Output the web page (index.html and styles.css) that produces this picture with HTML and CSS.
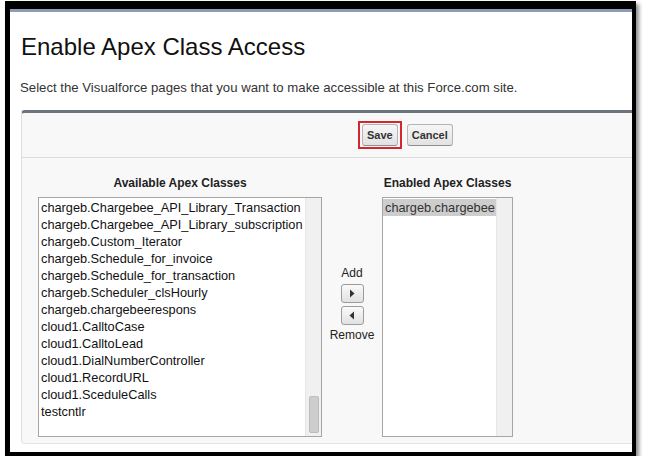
FILE: index.html
```html
<!DOCTYPE html>
<html lang="en">
<head>
    <meta charset="UTF-8">
    <meta name="viewport" content="width=device-width, initial-scale=1.0">
    <title>Enable Apex Class Access</title>
    <link rel="stylesheet" href="styles.css">
</head>
<body>
    <div class="frame">
        <div class="stripe"></div>
        <div class="page">
            <h1>Enable Apex Class Access</h1>
            <p class="intro">Select the Visualforce pages that you want to make accessible at this Force.com site.</p>

            <div class="panel">
                <div class="button-row">
                    <span class="highlight"><button class="btn">Save</button></span>
                    <button class="btn btn-cancel">Cancel</button>
                </div>

                <div class="picker">
                    <div class="col col-available">
                        <div class="col-title">Available Apex Classes</div>
                        <div class="listbox">
                            <ul class="options">
                                <li>chargeb.Chargebee_API_Library_Transaction</li>
                                <li>chargeb.Chargebee_API_Library_subscription</li>
                                <li>chargeb.Custom_Iterator</li>
                                <li>chargeb.Schedule_for_invoice</li>
                                <li>chargeb.Schedule_for_transaction</li>
                                <li>chargeb.Scheduler_clsHourly</li>
                                <li>chargeb.chargebeerespons</li>
                                <li>cloud1.CalltoCase</li>
                                <li>cloud1.CalltoLead</li>
                                <li>cloud1.DialNumberController</li>
                                <li>cloud1.RecordURL</li>
                                <li>cloud1.SceduleCalls</li>
                                <li>testcntlr</li>
                            </ul>
                            <div class="scrollbar"><div class="thumb"></div></div>
                        </div>
                    </div>

                    <div class="col-mid">
                        <div class="mid-label">Add</div>
                        <button class="arrow-btn" title="Add">
                            <svg width="6" height="9" viewBox="0 0 6 9"><path d="M1 0.5 L5.5 4.5 L1 8.5 Z" fill="#333"/></svg>
                        </button>
                        <button class="arrow-btn arrow-left" title="Remove">
                            <svg width="6" height="9" viewBox="0 0 6 9"><path d="M5 0.5 L0.5 4.5 L5 8.5 Z" fill="#333"/></svg>
                        </button>
                        <div class="mid-label mid-remove">Remove</div>
                    </div>

                    <div class="col col-enabled">
                        <div class="col-title">Enabled Apex Classes</div>
                        <div class="listbox">
                            <ul class="options">
                                <li class="selected">chargeb.chargebee</li>
                            </ul>
                            <div class="scrollbar"></div>
                        </div>
                    </div>
                </div>
            </div>
        </div>
    </div>
</body>
</html>
```

FILE: styles.css
```css
/* Рамка скриншота */
body {
    margin: 0;
    padding: 0;
    background: #fff;
    font-family: "Liberation Sans", Arial, sans-serif;
    color: #222;
}

.frame {
    box-sizing: content-box;
    width: 622px;
    height: 443px;
    margin: 1px 0 0 5px;
    border-style: solid;
    border-color: #000;
    border-width: 8px 4px 4px 5px;
    background: #fff;
    overflow: hidden;
    box-shadow: 3px 3px 4px rgba(0, 0, 0, 0.45);
}

.stripe {
    height: 3px;
    background-color: #8c9cb3;
}

.page {
    padding-left: 11px;
}

h1 {
    margin: 21px 0 0;
    font-size: 24px;
    line-height: 28px;
    font-weight: normal;
    color: #111;
}

.intro {
    margin: 19px 0 0 -1px;
    font-size: 13.2px;
    line-height: 16px;
    color: #333;
}

/* Основной блок */
.panel {
    margin: 14px -20px 0 0;
    background-color: #f8f8f8;
    border-top: 3px solid #6c7482;
    border-left: 1px solid #dedede;
    border-bottom: 1px solid #e4e4e4;
    border-radius: 4px 0 0 4px;
}

.button-row {
    display: flex;
    align-items: center;
    height: 44px;
    padding-left: 336px;
    border-bottom: 1px solid #dcdcdc;
}

.highlight {
    display: flex;
    padding: 1px 2px;
    border: 2px solid #d3262d;
}

.btn {
    height: 22px;
    padding: 0 4px;
    font-family: "Liberation Sans", Arial, sans-serif;
    font-size: 11px;
    font-weight: bold;
    color: #333;
    background: linear-gradient(#f6f6f6, #e2e2e2);
    border: 1px solid #b5b5b5;
    border-bottom-color: #8f8f8f;
    border-radius: 3px;
}

.btn-cancel {
    margin-left: 5px;
}

.picker {
    display: flex;
    align-items: flex-start;
    padding: 18px 0 6px 16px;
}

.col {
    display: flex;
    flex-direction: column;
}

.col-available {
    width: 284px;
}

.col-enabled {
    width: 131px;
}

.col-title {
    height: 14px;
    line-height: 14px;
    font-size: 12px;
    font-weight: bold;
    text-align: center;
    color: #222;
}

.listbox {
    display: flex;
    height: 240px;
    margin-top: 7px;
    box-sizing: border-box;
    border: 1px solid #a6a6a6;
    background: #fff;
}

.options {
    flex: 1;
    margin: 0;
    padding: 1px 0 0;
    list-style: none;
    font-size: 12.75px;
    line-height: 17px;
    color: #111;
    white-space: nowrap;
    overflow: hidden;
}

.options li {
    padding-left: 2px;
}

.options li.selected {
    background-color: #cdcdcd;
    color: #333;
}

.scrollbar {
    width: 15px;
    display: flex;
    flex-direction: column;
    background-color: #f0f0f0;
    border-left: 1px solid #e6e6e6;
}

.thumb {
    margin: auto 2px 3px 3px;
    height: 35px;
    background-color: #cdcdcd;
    border: 1px solid #bdbdbd;
    border-radius: 2px;
}

/* Кнопки добавления и удаления */
.col-mid {
    width: 60px;
    display: flex;
    flex-direction: column;
    align-items: center;
    margin-top: 90px;
}

.mid-label {
    font-size: 12px;
    line-height: 14px;
    color: #222;
}

.arrow-btn {
    display: flex;
    align-items: center;
    justify-content: center;
    width: 23px;
    height: 19px;
    margin-top: 4px;
    padding: 0;
    background: linear-gradient(#fafafa, #e1e1e1);
    border: 1px solid #9c9c9c;
    border-radius: 3px;
}

.arrow-left {
    margin-top: 3px;
}

.mid-remove {
    margin-top: 3px;
}
```
